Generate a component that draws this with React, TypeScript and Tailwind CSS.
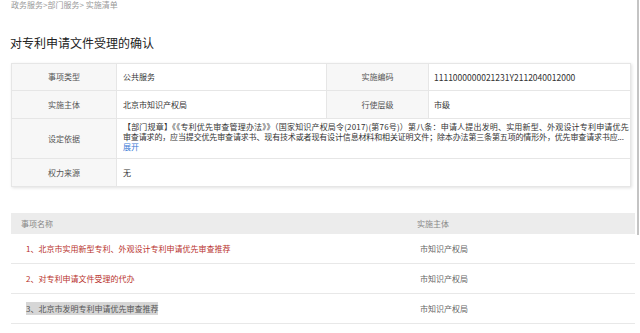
import React from "react";

const rows = [
  { name: "1、北京市实用新型专利、外观设计专利申请优先审查推荐", org: "市知识产权局", active: true },
  { name: "2、对专利申请文件受理的代办", org: "市知识产权局", active: true },
  { name: "3、北京市发明专利申请优先审查推荐", org: "市知识产权局", active: false },
];

const Label = ({ children, className = "" }: { children: React.ReactNode; className?: string }) => (
  <div className={`flex items-center justify-center bg-[#f7f7f7] text-[#555] ${className}`}>{children}</div>
);

export default function App() {
  return (
    <div className="relative w-[640px] h-[333px] overflow-hidden bg-white font-['Microsoft_YaHei','Noto_Sans_CJK_SC',sans-serif] text-[#333]">
      {/* Breadcrumb */}
      <div className="pl-[11px] h-[10px] text-[8px] leading-[10px] text-[#999]">
        政务服务&gt;部门服务&gt; 实施清单
      </div>

      {/* Title */}
      <h1 className="mt-[25px] pl-[10px] text-[12px] leading-[16px] text-[#222]">对专利申请文件受理的确认</h1>

      {/* Info table */}
      <div className="mt-[12px] ml-[11px] w-[620px] border border-[#e6e6e6] text-[8px] shadow-[1px_1px_3px_rgba(0,0,0,0.12)]">
        <div className="flex h-[27px] border-b border-[#e6e6e6]">
          <Label className="w-[105px] border-r border-[#e6e6e6]">事项类型</Label>
          <div className="w-[209px] flex items-center pl-[6px]">公共服务</div>
          <Label className="w-[103px] border-x border-[#e6e6e6]">实施编码</Label>
          <div className="flex-1 flex items-center pl-[5px] text-[8.5px]">1111000000021231Y2112040012000</div>
        </div>
        <div className="flex h-[28px] border-b border-[#e6e6e6]">
          <Label className="w-[105px] border-r border-[#e6e6e6]">实施主体</Label>
          <div className="w-[209px] flex items-center pl-[6px]">北京市知识产权局</div>
          <Label className="w-[103px] border-x border-[#e6e6e6]">行使层级</Label>
          <div className="flex-1 flex items-center pl-[5px]">市级</div>
        </div>
        <div className="flex h-[40px] border-b border-[#e6e6e6]">
          <Label className="w-[105px] border-r border-[#e6e6e6]">设定依据</Label>
          <div className="flex-1 min-w-0 pl-[6px] pr-[2px] pt-[3px] text-[8px] leading-[10px]">
            <div className="whitespace-nowrap tracking-[0.18px]">
              【部门规章】《《专利优先审查管理办法》》（国家知识产权局令(2017)(第76号)）第八条：申请人提出发明、实用新型、外观设计专利申请优先
            </div>
            <div className="whitespace-nowrap tracking-[-0.15px]">
              审查请求的，应当提交优先审查请求书、现有技术或者现有设计信息材料和相关证明文件；除本办法第三条第五项的情形外，优先审查请求书应...
            </div>
            <div className="text-[#3a7bd5]">展开</div>
          </div>
        </div>
        <div className="flex h-[27px]">
          <Label className="w-[105px] border-r border-[#e6e6e6]">权力来源</Label>
          <div className="flex-1 flex items-center pl-[6px]">无</div>
        </div>
      </div>

      {/* Item list */}
      <div className="mt-[26px] ml-[11px] w-[624px] text-[8px]">
        <div className="flex h-[21px] items-center bg-[#ececec] text-[#888]">
          <div className="w-[395px] pl-[10px]">事项名称</div>
          <div className="pl-[11px]">实施主体</div>
        </div>
        {rows.map((r) => (
          <div key={r.name} className="flex h-[30px] items-center border-b border-[#e8e8e8]">
            <div className="w-[395px] pl-[15px]">
              {r.active ? (
                <span className="text-[#b8322c]">{r.name}</span>
              ) : (
                <span className="bg-[#d6d6d6] text-[#555] py-[1px]">{r.name}</span>
              )}
            </div>
            <div className="pl-[14px] text-[#666]">{r.org}</div>
          </div>
        ))}
      </div>

      {/* Scrollbar */}
      <div className="absolute right-[1px] top-0 w-[2px] h-[235px] bg-[#c4c4c4]" />
    </div>
  );
}
